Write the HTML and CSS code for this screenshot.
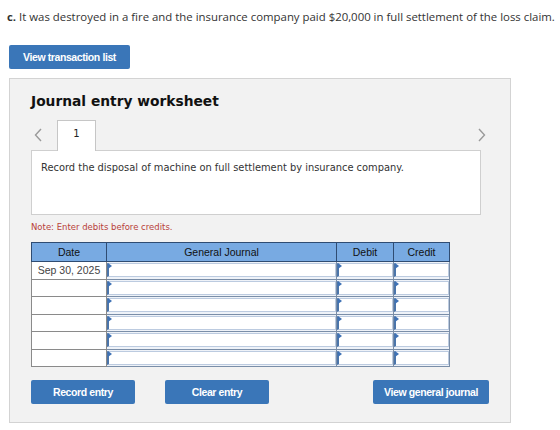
FILE: index.html
```html
<!DOCTYPE html>
<html lang="en">
<head>
    <meta charset="UTF-8">
    <title>Journal entry worksheet</title>
    <link rel="stylesheet" href="styles.css">
</head>
<body>
    <p class="question"><b>c.</b> It was destroyed in a fire and the insurance company paid $20,000 in full settlement of the loss claim.</p>

    <button class="btn btn-list">View transaction list</button>

    <div class="worksheet">
        <h2>Journal entry worksheet</h2>

        <div class="tabs">
            <span class="arrow arrow-left">
                <svg width="8" height="14" viewBox="0 0 8 14"><path d="M7 1 L1.5 7 L7 13" fill="none" stroke="#9a9a9a" stroke-width="1.4"/></svg>
            </span>
            <div class="tab">1</div>
            <span class="arrow arrow-right">
                <svg width="8" height="14" viewBox="0 0 8 14"><path d="M1 1 L6.5 7 L1 13" fill="none" stroke="#9a9a9a" stroke-width="1.4"/></svg>
            </span>
        </div>

        <div class="description">
            Record the disposal of machine on full settlement by insurance company.
        </div>

        <p class="note">Note: Enter debits before credits.</p>

        <table class="journal">
            <thead>
                <tr>
                    <th class="col-date">Date</th>
                    <th class="col-account">General Journal</th>
                    <th class="col-debit">Debit</th>
                    <th class="col-credit">Credit</th>
                </tr>
            </thead>
            <tbody>
                <tr>
                    <td class="date">Sep 30, 2025</td>
                    <td class="entry"><div class="field"></div></td>
                    <td class="entry"><div class="field"></div></td>
                    <td class="entry"><div class="field"></div></td>
                </tr>
                <tr>
                    <td class="date"></td>
                    <td class="entry"><div class="field"></div></td>
                    <td class="entry"><div class="field"></div></td>
                    <td class="entry"><div class="field"></div></td>
                </tr>
                <tr>
                    <td class="date"></td>
                    <td class="entry"><div class="field"></div></td>
                    <td class="entry"><div class="field"></div></td>
                    <td class="entry"><div class="field"></div></td>
                </tr>
                <tr>
                    <td class="date"></td>
                    <td class="entry"><div class="field"></div></td>
                    <td class="entry"><div class="field"></div></td>
                    <td class="entry"><div class="field"></div></td>
                </tr>
                <tr>
                    <td class="date"></td>
                    <td class="entry"><div class="field"></div></td>
                    <td class="entry"><div class="field"></div></td>
                    <td class="entry"><div class="field"></div></td>
                </tr>
                <tr>
                    <td class="date"></td>
                    <td class="entry"><div class="field"></div></td>
                    <td class="entry"><div class="field"></div></td>
                    <td class="entry"><div class="field"></div></td>
                </tr>
            </tbody>
        </table>

        <div class="actions">
            <button class="btn btn-record">Record entry</button>
            <button class="btn btn-clear">Clear entry</button>
            <button class="btn btn-view">View general journal</button>
        </div>
    </div>
</body>
</html>
```

FILE: styles.css
```css
* {
    margin: 0;
    padding: 0;
    box-sizing: border-box;
}

body {
    background: #fff;
    color: #333;
    font-family: 'Liberation Sans', Arial, sans-serif;
    padding: 9px 4px 0 9px;
}

.question {
    font-family: 'Open Sans', 'Liberation Sans', sans-serif;
    font-size: 11.4px;
    line-height: 16px;
    color: #333;
    margin-left: -2px;
    white-space: nowrap;
}

.btn {
    display: inline-flex;
    align-items: center;
    justify-content: center;
    height: 24px;
    background: #3a76b8;
    color: #fff;
    border: none;
    border-radius: 2px;
    font-family: 'Liberation Sans', Arial, sans-serif;
    font-size: 10.5px;
    font-weight: 700;
    letter-spacing: -0.4px;
}

.btn-list {
    width: 121px;
    margin-top: 20px;
}

.worksheet {
    width: 502px;
    margin-top: 9px;
    background: #f2f2f2;
    border: 1px solid #d3d3d3;
    padding: 12px 21px 18px 21px;
}

.worksheet h2 {
    font-family: 'DejaVu Sans', Verdana, sans-serif;
    font-size: 13.8px;
    font-weight: 700;
    line-height: 20px;
    color: #111;
    margin-bottom: 9px;
}

.tabs {
    display: flex;
    align-items: stretch;
    height: 30px;
}

.arrow {
    display: flex;
    align-items: center;
}

.arrow-left {
    width: 26px;
    padding-left: 3px;
}

.arrow-right {
    margin-left: auto;
    padding-right: 3px;
}

.tab {
    width: 39px;
    background: #fff;
    border: 1px solid #c6c6c6;
    border-bottom: none;
    font-family: 'DejaVu Sans', Verdana, sans-serif;
    font-size: 10px;
    text-align: center;
    padding-top: 7px;
    color: #222;
    position: relative;
    z-index: 1;
    margin-bottom: -1px;
}

.description {
    height: 65px;
    margin-right: 8px;
    background: #fff;
    border: 1px solid #cfcfcf;
    padding: 11px 9px;
    font-family: 'DejaVu Sans', Verdana, sans-serif;
    font-size: 9.9px;
    color: #333;
}

.note {
    font-family: 'DejaVu Sans', Verdana, sans-serif;
    font-size: 8.5px;
    line-height: 12px;
    color: #b8413a;
    margin-top: 6px;
}

.journal {
    margin-top: 9px;
    border-collapse: collapse;
    width: 418px;
    table-layout: fixed;
    font-size: 10.5px;
}

.journal th {
    height: 19px;
    background: #78aae2;
    border: 1px solid #2f4c72;
    font-weight: 400;
    color: #111;
    text-align: center;
}

.col-date { width: 75px; }
.col-account { width: 230px; }
.col-debit { width: 57px; }
.col-credit { width: 56px; }

.journal td {
    height: 17.5px;
    padding: 0;
}

.journal td.date {
    background: #fff;
    border: 1px solid #8a8a8a;
    text-align: center;
    color: #444;
}

.journal td.entry {
    background: #eef2f8;
    border: 1px solid #7a8ea8;
    padding: 1px 0 1px 0;
}

.field {
    position: relative;
    height: 14px;
    background: #fff;
    border: 1px solid #bccbe0;
    border-left: 2px solid #4b75aa;
}

.field::before {
    content: '';
    position: absolute;
    top: -1px;
    left: -1px;
    border-top: 3px solid transparent;
    border-bottom: 3px solid transparent;
    border-left: 4px solid #3f72b5;
}

.actions {
    display: flex;
    gap: 30px;
    margin-top: 13px;
}

.btn-record,
.btn-clear {
    width: 104px;
}

.btn-view {
    width: 116px;
    margin-left: auto;
}
```
